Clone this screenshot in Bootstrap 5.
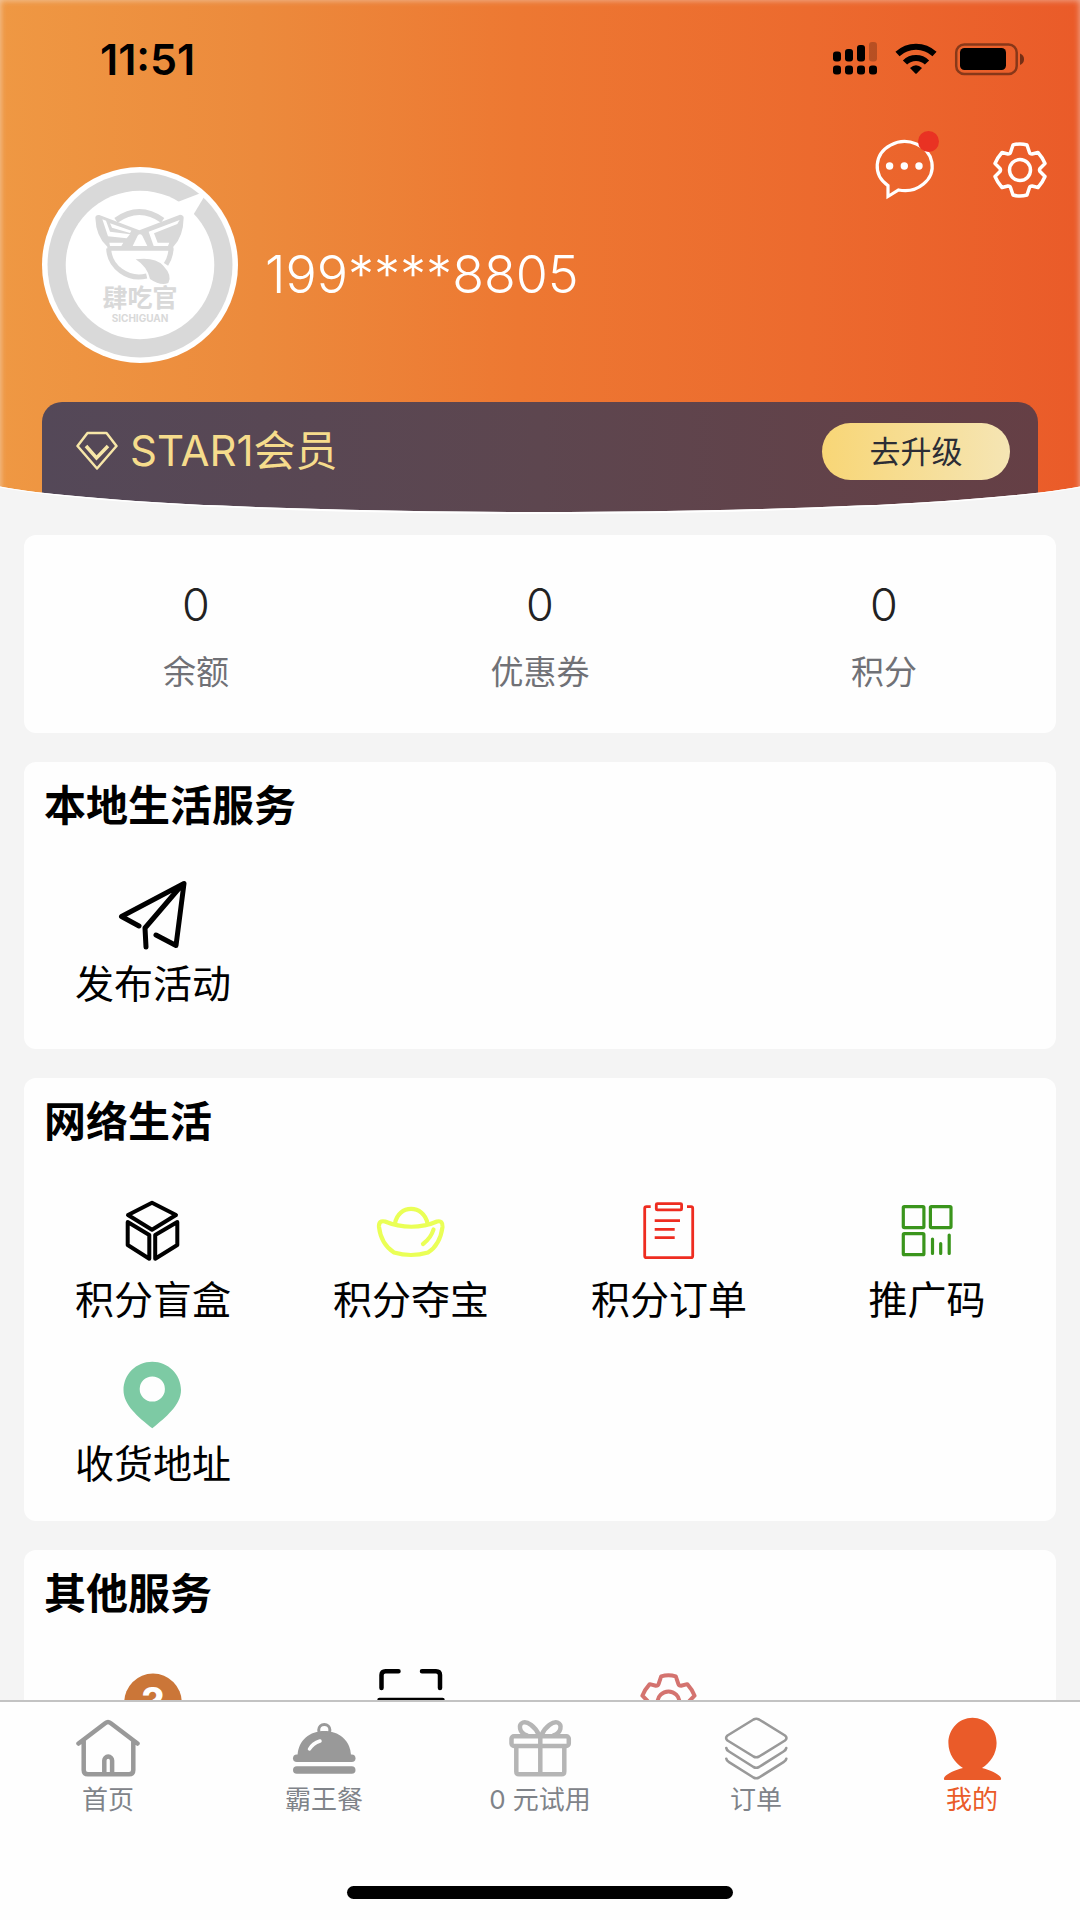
<!DOCTYPE html>
<html lang="zh-CN">
<head>
<meta charset="utf-8">
<meta name="viewport" content="width=device-width, initial-scale=1">
<title>我的</title>
<link href="https://cdn.jsdelivr.net/npm/bootstrap@5.3.0/dist/css/bootstrap.min.css" rel="stylesheet">
<style>
:root { --page: #f4f4f4; --panel: #fefefe; --accent: #ea5b29; }
body { background: var(--page); font-family: Inter, "Noto Sans CJK SC", sans-serif; color: #000; }
a { color: inherit; text-decoration: none; }
svg { display: block; flex: none; }
.stroked { fill: none; stroke: currentColor; stroke-linecap: round; stroke-linejoin: round; }
.screen { height: 100vh; }
.content { min-height: 0; overflow-y: auto; scrollbar-width: none; }
.content::-webkit-scrollbar { display: none; }

/* header */
.hero { background: linear-gradient(90deg, #ef9843 0%, #ec8a3c 24%, #ed7832 48%, #ec6a2e 75%, #ea5b29 100%); padding-bottom: 23px; }
.hero::before { content: ""; position: absolute; inset: 0; box-shadow: inset 0 0 6px rgba(244, 244, 244, .6); pointer-events: none; }
.hero::after { content: ""; position: absolute; inset: -100px -3% 23px; border-radius: 0 0 50% 50% / 0 0 38px 38px; box-shadow: 0 0 0 2px #fff, 0 0 0 80px var(--page); pointer-events: none; }
.status-row { height: 118px; padding: 0 54px 0 100px; }
.clock { font-size: 43px; font-weight: 600; line-height: 48px; }
.profile-row { height: 284px; padding: 0 25px 0 42px; }
.avatar { margin-top: 49px; }
.user-name { margin: 127px 0 0 27px; font-size: 52px; line-height: 60px; font-weight: 300; color: #fff; }
.hero-actions { margin-top: 17px; gap: 46px; color: #fff; }
.dot { position: absolute; top: -4px; right: 0; width: 21px; height: 21px; border-radius: 50%; background: #e93223; }
.member-bar { height: 110px; margin: 0 42px; padding: 0 28px 12px 34px; border-radius: 20px 20px 0 0; background: linear-gradient(90deg, #544858, #5d464f 50%, #653f45); color: #f6dc8c; }
.member-name { margin-left: 12px; font-size: 42px; line-height: 50px; }
.upgrade { width: 188px; height: 57px; border: 0; border-radius: 29px; background: linear-gradient(90deg, #f8d676, #f5e5b4); color: #2c2d35; font-size: 31px; line-height: 57px; padding: 0; }

/* panels */
.panels { gap: 29px; padding: 0 24px; }
.panel { background: var(--panel); border-radius: 12px; }
.stats { padding: 40px 0 37px; }
.stat-num { font-size: 45px; line-height: 60px; font-weight: 300; color: #222; }
.stat-label { font-size: 33px; line-height: 48px; color: #707176; margin-top: 13px; }
.panel-title { font-size: 42px; line-height: 60px; font-weight: 700; padding: 14px 20px 0; margin: 0 0 26px; }
.service { gap: 10px; padding: 18px 0; font-size: 39px; line-height: 48px; }
.services { padding-bottom: 15px; }
.short .services { padding-bottom: 23px; }

/* tab bar */
.tabbar { height: 220px; background: var(--panel); border-top: 2px solid #c3c3c3; }
.tab { gap: 5px; padding-top: 14px; font-size: 26px; line-height: 30px; color: #7f8389; }
.tab svg { color: #999; }
.tab.active, .tab.active svg { color: var(--accent); }
.home-bar { width: 386px; height: 13px; border-radius: 7px; background: #000; margin-bottom: 21px; }
</style>
</head>
<body>
<svg width="0" height="0" class="position-absolute" aria-hidden="true">
  <symbol id="gear" viewBox="-35 -35 70 70">
    <path d="M-7-25Q0-27 7-25L9.500-17.500Q10-16 12-16L18-17.500Q22.500-12.500 25-6.500L20-1.500Q19 0 20 1.500L25 6.500Q22.500 12.500 18 17.500L12 16Q10 16 9.500 17.500L7 25Q0 27-7 25L-9.500 17.500Q-10 16-12 16L-18 17.500Q-22.500 12.500-25 6.500L-20 1.500Q-19 0-20-1.500L-25-6.500Q-22.500-12.500-18-17.500L-12-16Q-10-16-9.500-17.500Z"/>
    <circle r="10.500"/>
  </symbol>
</svg>
<div class="screen d-flex flex-column">
  <main class="content flex-grow-1">
    <header class="hero position-relative overflow-hidden">
      <div class="status-row d-flex align-items-center justify-content-between">
        <span class="clock">11:51</span>
        <div class="d-flex align-items-center gap-3" aria-hidden="true">
          <svg width="46" height="34" viewBox="0 0 46 34">
            <rect x="1" y="9.500" width="8" height="10" rx="3"/><rect x="13" y="7" width="8" height="12.500" rx="3"/><rect x="25" y="3" width="8" height="16.500" rx="3"/><rect x="37" y="0" width="8" height="19.500" rx="3" opacity=".22"/>
            <rect x="1" y="23.500" width="8" height="9" rx="3"/><rect x="13" y="23.500" width="8" height="9" rx="3"/><rect x="25" y="23.500" width="8" height="9" rx="3"/><rect x="37" y="23.500" width="8" height="9" rx="3"/>
          </svg>
          <svg width="44" height="34" viewBox="0 0 44 34">
            <path d="M3.500 12A27 27 0 0 1 40.500 12M11 20.500A15.500 15.500 0 0 1 33 20.500" fill="none" stroke="#000" stroke-width="6"/>
            <path d="M16 26Q22 20.500 28 26L22.700 31.500Q22 32 21.300 31.500Z"/>
          </svg>
          <svg width="72" height="34" viewBox="0 0 72 34">
            <rect x="2.200" y="2.500" width="60.500" height="29.500" rx="8" fill="none" stroke="#000" stroke-width="2.500" opacity=".42"/>
            <rect x="6" y="6" width="46" height="22" rx="4.500"/><path d="M66 11.500Q70 13 70 17.300T66 23Z" opacity=".5"/>
          </svg>
        </div>
      </div>
      <div class="profile-row d-flex align-items-start">
        <svg class="avatar" width="196" height="196" viewBox="0 0 196 196" role="img" aria-label="肆吃官">
          <circle cx="98" cy="98" r="98" fill="#fff"/><circle cx="98" cy="98" r="92.500" fill="#d9d9d9"/><circle cx="98" cy="98" r="74.300" fill="#fff"/>
          <path d="M133 36L159 26L162 30L150 50Z" fill="#fff"/>
          <g transform="translate(48 38) scale(.3333)" fill="#d9d9d9">
            <path d="M78 46Q148-4 218 46" fill="none" stroke="#d9d9d9" stroke-width="17"/>
            <path d="M16 38Q17 28 28 30L148 76L270 29Q281 30 281 38Q280 95 250 125V137H52V125Q18 95 16 38Z"/>
            <path d="M37 43L48 47L60 80L120 88L110 100L54 94ZM60 55L124 77L120 84L66 68ZM58 113H100L94 123H60ZM128 123L143 92Q150 84 157 92L172 123ZM176 80L269 45L262 57L192 85L203 113H238L234 123H191Z" fill="#fff"/>
            <path d="M56 130A92 88 0 0 0 170 213M243 130Q243 155 228 178" fill="none" stroke="#d9d9d9" stroke-width="15"/>
            <path d="M137 163Q195 155 220 182Q248 212 235 234Q212 244 180 222Q172 185 137 163Z"/>
          </g>
          <g fill="#d9d9d9" text-anchor="middle" font-weight="700">
            <text x="98" y="140" font-size="25" font-family="Noto Sans CJK SC, sans-serif">肆吃官</text>
            <text x="98" y="155" font-size="10" font-family="Inter, sans-serif">SICHIGUAN</text>
          </g>
        </svg>
        <span class="user-name">199****8805</span>
        <div class="hero-actions d-flex ms-auto">
          <a href="#" class="position-relative" aria-label="消息">
            <svg width="70" height="70" viewBox="0 0 70 70" class="stroked" stroke-width="3.200">
              <path d="M19 50.600V61.500L29.500 55A27.500 24.500 0 1 0 19 50.600Z" style="stroke-linejoin:miter"/>
              <g fill="#fff" stroke="none"><circle cx="20.600" cy="31" r="3.700"/><circle cx="35.300" cy="31" r="3.700"/><circle cx="50" cy="31" r="3.700"/></g>
            </svg>
            <span class="dot"></span>
          </a>
          <a href="#" aria-label="设置"><svg width="70" height="70" class="stroked" stroke-width="3.500"><use href="#gear"/></svg></a>
        </div>
      </div>
      <div class="member-bar d-flex align-items-center">
        <svg width="42" height="40" viewBox="0 0 42 40" class="stroked" stroke-width="2.500" style="color:#f7e6a8">
          <path d="M11.500 2H30.500L40.500 15L21 37.500L1.500 15Z"/><path d="M10 15L20.500 27L32 15" stroke-width="3.500" stroke-linecap="butt" stroke-linejoin="miter"/>
        </svg>
        <span class="member-name">STAR1会员</span>
        <button type="button" class="upgrade ms-auto">去升级</button>
      </div>
    </header>

    <div class="panels d-flex flex-column">
      <section class="panel stats row g-0 text-center">
        <div class="col"><div class="stat-num">0</div><div class="stat-label">余额</div></div>
        <div class="col"><div class="stat-num">0</div><div class="stat-label">优惠券</div></div>
        <div class="col"><div class="stat-num">0</div><div class="stat-label">积分</div></div>
      </section>

      <section class="panel short">
        <h2 class="panel-title">本地生活服务</h2>
        <div class="services row g-0">
          <a href="#" class="service col-3 d-flex flex-column align-items-center">
            <svg width="70" height="70" class="stroked" stroke-width="5"><path d="M21 46L3.500 36.500L66 3.500L58 65.500L38 55M63 6L27 48L28 67"/></svg>
            发布活动
          </a>
        </div>
      </section>

      <section class="panel">
        <h2 class="panel-title">网络生活</h2>
        <div class="services row g-0">
          <a href="#" class="service col-3 d-flex flex-column align-items-center">
            <svg width="70" height="70" class="stroked" stroke-width="4"><path d="M34 6.700L58 19L34 33.700L10 19ZM9.700 26L31.300 39V62.700L9.700 49ZM59.300 26L37.200 39V62.700L59.300 49Z"/></svg>
            积分盲盒
          </a>
          <a href="#" class="service col-3 d-flex flex-column align-items-center">
            <svg width="70" height="70" class="stroked" stroke-width="4.200" style="color:#eaff56"><path d="M19 27.500C22 8 48 8 51.500 27.500M9 25.500C26 32.500 45 32.500 61 25.500Q67 24 66.500 31Q64 49 52 56.500Q35 61.500 18 56.500Q5 48 3 31Q2.500 24 9 25.500ZM57.500 33.500Q55 42 47 48"/></svg>
            积分夺宝
          </a>
          <a href="#" class="service col-3 d-flex flex-column align-items-center">
            <svg width="70" height="70" class="stroked" stroke-width="2.800" style="color:#ee2c20"><path d="M16.700 10.700H12.500Q10.700 10.700 10.700 12.500V60Q10.700 61.700 12.500 61.700H57Q58.700 61.700 58.700 60V12.500Q58.700 10.700 57 10.700H53M20.700 24.700H46M20.700 33.300H40.700M20.700 41.700H40.700" stroke-linecap="butt"/><rect x="22.300" y="7.600" width="25.300" height="6.300" rx="1"/></svg>
            积分订单
          </a>
          <a href="#" class="service col-3 d-flex flex-column align-items-center">
            <svg width="70" height="70" class="stroked" stroke-width="3.200" style="color:#3a951c"><rect x="11.300" y="10.600" width="20.600" height="21" rx="1"/><rect x="38.400" y="10.600" width="20.600" height="21" rx="1"/><rect x="11.300" y="37.700" width="20.600" height="21" rx="1"/><path d="M40.500 43V57.500M48.700 47.500V57.500M57.200 39V57.500"/></svg>
            推广码
          </a>
          <a href="#" class="service col-3 d-flex flex-column align-items-center">
            <svg width="70" height="70" fill="#7dcaa4"><path fill-rule="evenodd" d="M34.300 1.700C50 1.700 63 14.500 63 30C63 45 48 57 34.300 68.300C20 57 5.500 45 5.500 30C5.500 14.500 18 1.700 34.300 1.700ZM34.300 16.400A12.600 12.600 0 1 0 34.300 41.600A12.600 12.600 0 1 0 34.300 16.400Z"/></svg>
            收货地址
          </a>
        </div>
      </section>

      <section class="panel">
        <h2 class="panel-title">其他服务</h2>
        <div class="services row g-0">
          <a href="#" class="service col-3 d-flex flex-column align-items-center" aria-label="帮助">
            <svg width="70" height="70"><circle cx="35" cy="34.300" r="28.700" fill="#cb7638"/><text x="35" y="49" text-anchor="middle" font-size="41" font-weight="700" fill="#fff">?</text></svg>
          </a>
          <a href="#" class="service col-3 d-flex flex-column align-items-center" aria-label="扫一扫">
            <svg width="70" height="70" class="stroked" stroke-width="4.500"><path d="M5.500 20V7Q5.500 3.200 9.500 3.200H22.500M46 3.200H60Q64 3.200 64 7V20M3.500 32H66.500M5.500 45V58Q5.500 62 9.500 62H22.500M46 62H60Q64 62 64 58V45"/></svg>
          </a>
          <a href="#" class="service col-3 d-flex flex-column align-items-center" aria-label="设置">
            <svg width="70" height="70" class="stroked" stroke-width="3.800" style="color:#d4736f" viewBox="2 2 67 67"><use href="#gear" width="70" height="70"/></svg>
          </a>
        </div>
      </section>
    </div>
  </main>

  <nav class="tabbar flex-shrink-0 d-flex flex-column justify-content-between align-items-center">
    <div class="row g-0 w-100">
      <a href="#" class="tab col d-flex flex-column align-items-center">
        <svg width="64" height="64" class="stroked" stroke-width="4.500"><path d="M2.500 27.500L29.500 7Q32 5 34.500 7L61.500 27.500M7.700 25V54Q7.700 58.300 12 58.300H53Q57.300 58.300 57.300 54V25M28.300 58V44.500A3.900 3.900 0 0 1 36.100 44.500V58"/></svg>
        首页
      </a>
      <a href="#" class="tab col d-flex flex-column align-items-center">
        <svg width="64" height="64" fill="currentColor"><path d="M5.500 40C6 24 18 15 32.300 15S58.500 24 59 40Z"/><circle cx="32.300" cy="14" r="5.600" fill="none" stroke="currentColor" stroke-width="3"/><rect x="1" y="38.500" width="62.500" height="7.600" rx="3.800"/><rect x="1" y="50.200" width="62.500" height="7.600" rx="3.800"/><path d="M17.500 33Q20.500 27.500 28 25" fill="none" stroke="#fefefe" stroke-width="3.500" stroke-linecap="round"/></svg>
        霸王餐
      </a>
      <a href="#" class="tab col d-flex flex-column align-items-center">
        <svg width="64" height="64" class="stroked" stroke-width="4.500" style="color:#b5b5b5"><rect x="3.500" y="20.300" width="57.300" height="9.700" rx="2.500"/><path d="M8.300 31V55.500Q8.300 58.300 11 58.300H53.500Q56.300 58.300 56.300 55.500V31M32.300 20V58M31 19C27 10 19 5 15 6.500C10 8.500 11 17 19 19.500M33.500 19C37.500 10 45.500 5 49.500 6.500C54.500 8.500 53.500 17 45.500 19.500"/></svg>
        <span>0 元试用</span>
      </a>
      <a href="#" class="tab col d-flex flex-column align-items-center">
        <svg width="64" height="64" class="stroked" stroke-width="2.600"><path d="M29.500 3.500Q32.200 2 35 3.500L61 19.500Q64 22 61 24.500L35 40.500Q32.200 42 29.500 40.500L3.500 24.500Q.7 22 3.500 19.500ZM2.300 32Q2.500 34 5 35.500L29.500 51Q32.200 52.500 35 51L59.500 35.500Q62 34 62.300 32M2.300 42.700Q2.500 44.700 5 46.200L29.500 61.500Q32.200 63 35 61.500L59.500 46.200Q62 44.700 62.300 42.700"/></svg>
        订单
      </a>
      <a href="#" class="tab active col d-flex flex-column align-items-center" aria-current="page">
        <svg width="64" height="64" fill="currentColor"><path d="M32.500 1.700C46 1.700 56.600 13 56.600 27C56.600 38 50 47 42 52C50 54 57 57 60.500 61Q62 64 60 64H5Q3 64 4.500 61C8 57 15 54 23 52C15 47 8.400 38 8.400 27C8.400 13 19 1.700 32.500 1.700Z"/></svg>
        我的
      </a>
    </div>
    <div class="home-bar"></div>
  </nav>
</div>
<script src="https://cdn.jsdelivr.net/npm/bootstrap@5.3.0/dist/js/bootstrap.bundle.min.js"></script>
</body>
</html>
